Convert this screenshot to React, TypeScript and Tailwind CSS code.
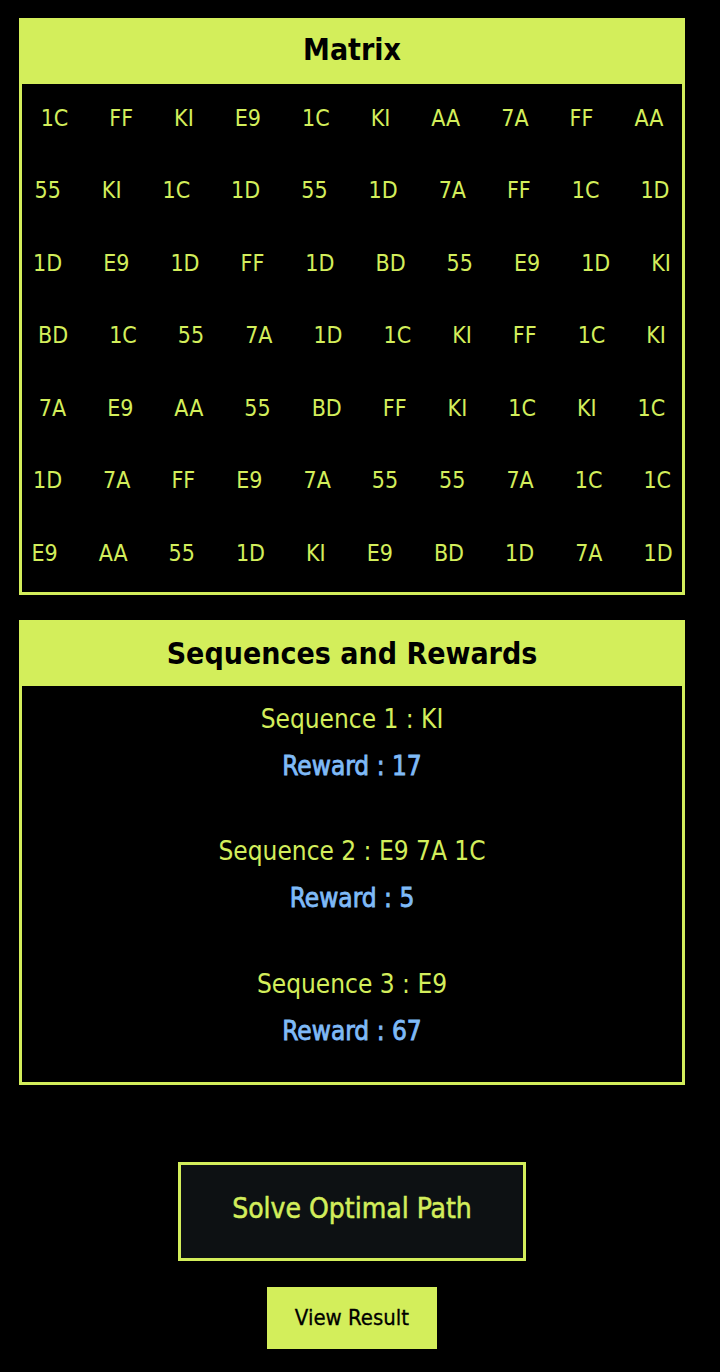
import React from "react";

const rows: string[][] = [
  ["1C", "FF", "KI", "E9", "1C", "KI", "AA", "7A", "FF", "AA"],
  ["55", "KI", "1C", "1D", "55", "1D", "7A", "FF", "1C", "1D"],
  ["1D", "E9", "1D", "FF", "1D", "BD", "55", "E9", "1D", "KI"],
  ["BD", "1C", "55", "7A", "1D", "1C", "KI", "FF", "1C", "KI"],
  ["7A", "E9", "AA", "55", "BD", "FF", "KI", "1C", "KI", "1C"],
  ["1D", "7A", "FF", "E9", "7A", "55", "55", "7A", "1C", "1C"],
  ["E9", "AA", "55", "1D", "KI", "E9", "BD", "1D", "7A", "1D"],
];

const seqs = [
  { s: "Sequence 1 : KI", r: "Reward : 17" },
  { s: "Sequence 2 : E9 7A 1C", r: "Reward : 5" },
  { s: "Sequence 3 : E9", r: "Reward : 67" },
];

const font = {
  fontFamily: '"Liberation Sans Narrow", "DejaVu Sans Condensed", "Liberation Sans", sans-serif',
};

export default function App() {
  return (
    <div className="min-h-[1372px] w-[720px] bg-black" style={font}>
      <div className="ml-[19px] w-[666px] pt-[18px]">
        <div className="border-[3px] border-[#d3ee5b]">
          <div className="flex h-[63px] items-center justify-center bg-[#d3ee5b] pb-[6px]">
            <span className="text-[30px] font-bold text-black">Matrix</span>
          </div>
          <div className="bg-black">
            {rows.map((row, i) => (
              <div key={i} className="flex h-[72.5px] items-center justify-center gap-[41px] pb-[4px]">
                {row.map((c, j) => (
                  <span key={j} className="text-[23px] leading-none text-[#d3ee5b]">
                    {c}
                  </span>
                ))}
              </div>
            ))}
          </div>
        </div>

        <div className="mt-[25px] border-[3px] border-[#d3ee5b]">
          <div className="flex h-[63px] items-center justify-center bg-[#d3ee5b] pb-[2px]">
            <span className="text-[30px] font-bold text-black">Sequences and Rewards</span>
          </div>
          <div className="flex flex-col items-center gap-[49.5px] bg-black pb-[33px] pt-[15px]">
            {seqs.map((q, i) => (
              <div key={i} className="flex flex-col items-center">
                <div className="text-[26px] leading-[36px] text-[#d3ee5b]">{q.s}</div>
                <div className="mt-[11px] text-[26px] leading-[36px] text-[#7fbaf7] [-webkit-text-stroke:0.8px_#7fbaf7]">
                  {q.r}
                </div>
              </div>
            ))}
          </div>
        </div>

        <div className="mt-[77px] flex justify-center">
          <button className="flex h-[99px] w-[348px] items-center justify-center border-[3px] border-[#d3ee5b] bg-[#0d1113] pb-[4px] text-[28px] text-[#d3ee5b] [-webkit-text-stroke:0.5px_#d3ee5b]">
            Solve Optimal Path
          </button>
        </div>
        <div className="mt-[26px] flex justify-center">
          <button className="flex h-[62px] w-[170px] items-center justify-center bg-[#d3ee5b] text-[22px] text-black [-webkit-text-stroke:0.3px_#000]">
            View Result
          </button>
        </div>
      </div>
    </div>
  );
}
